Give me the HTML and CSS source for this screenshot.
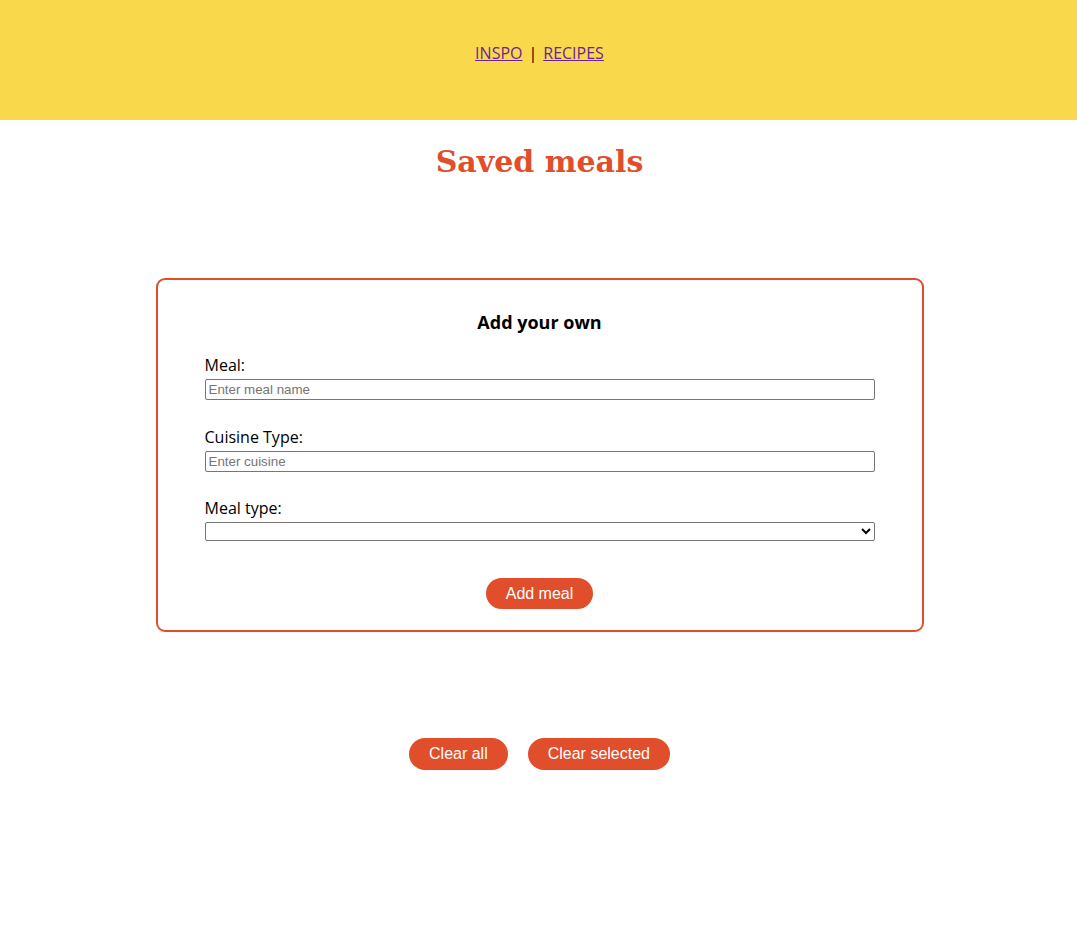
FILE: index.html
```html
<!DOCTYPE html>
<html>
<head>
<meta charset="utf-8">
<link rel="stylesheet" href="styles.css">
</head>
<body>
<header class="topbar">
  <nav class="nav"><a href="#">INSPO</a><span class="sep">|</span><a href="#">RECIPES</a></nav>
</header>
<h1 class="title">Saved meals</h1>
<main class="main">
  <form class="card">
    <h2 class="card-title">Add your own</h2>
    <div class="field">
      <label class="label">Meal:</label>
      <input class="input" type="text" placeholder="Enter meal name">
    </div>
    <div class="field field-mid">
      <label class="label">Cuisine Type:</label>
      <input class="input" type="text" placeholder="Enter cuisine">
    </div>
    <div class="field field-last">
      <label class="label">Meal type:</label>
      <select class="select"><option></option></select>
    </div>
    <div class="actions"><button type="button" class="btn">Add meal</button></div>
  </form>
  <div class="clear-row">
    <button type="button" class="btn">Clear all</button>
    <button type="button" class="btn">Clear selected</button>
  </div>
</main>
</body>
</html>
```
FILE: styles.css
```css
html, body { margin: 0; padding: 0; background: #fff; }
body { font-family: "Open Sans", "Noto Sans", sans-serif; color: #000; padding-left: 2px; }
.topbar {
  background: #F9D94B;
  height: 120px;
  display: flex;
  justify-content: center;
  align-items: flex-start;
  margin-left: -2px;
  padding-left: 2px;
}
.nav {
  margin-top: 43px;
  font-size: 16px;
  line-height: 20px;
  display: flex;
}
.nav a { color: #6b1f9a; text-decoration: underline; }
.sep { margin: 0 6px; color: #000; }
.title {
  margin: 22px 0 0;
  text-align: center;
  font-family: "DejaVu Serif", "Liberation Serif", serif;
  font-weight: bold;
  font-size: 30px;
  line-height: 40px;
  color: #E04E2B;
}
.main { display: flex; flex-direction: column; align-items: center; }
.card {
  margin-top: 96px;
  width: 670px;
  border: 2px solid #E04E2B;
  border-radius: 9px;
  padding: 30px 47px 21px;
  box-sizing: content-box;
}
.card-title {
  margin: 0 0 21px;
  text-align: center;
  font-size: 18px;
  line-height: 24px;
  font-weight: bold;
}
.field { display: flex; flex-direction: column; margin-bottom: 27px; }
.field-mid { margin-bottom: 26px; }
.field-last { margin-bottom: 37px; }
.label { font-size: 16px; line-height: 20px; margin-bottom: 4px; }
.input {
  margin: 0;
  height: 21px;
  box-sizing: border-box;
  border: 1px solid #767676;
  border-radius: 2px;
  padding: 1px 3px;
  font-family: "Liberation Sans", Arial, sans-serif;
  font-size: 13.33px;
}
.input::placeholder { color: #757575; }
.select {
  margin: 0;
  height: 19px;
  box-sizing: border-box;
  border: 1px solid #767676;
  border-radius: 2px;
  background: #fff;
  font-size: 13.33px;
}
.actions { display: flex; justify-content: center; }
.btn {
  background: #E04E2B;
  color: #fff;
  border: none;
  border-radius: 16px;
  height: 31px;
  padding: 0 20px;
  font-family: "Liberation Sans", Arial, sans-serif;
  font-size: 16px;
  cursor: pointer;
}
.clear-row {
  margin-top: 106px;
  display: flex;
  gap: 20px;
}
.clear-row .btn { height: 32px; }
```
